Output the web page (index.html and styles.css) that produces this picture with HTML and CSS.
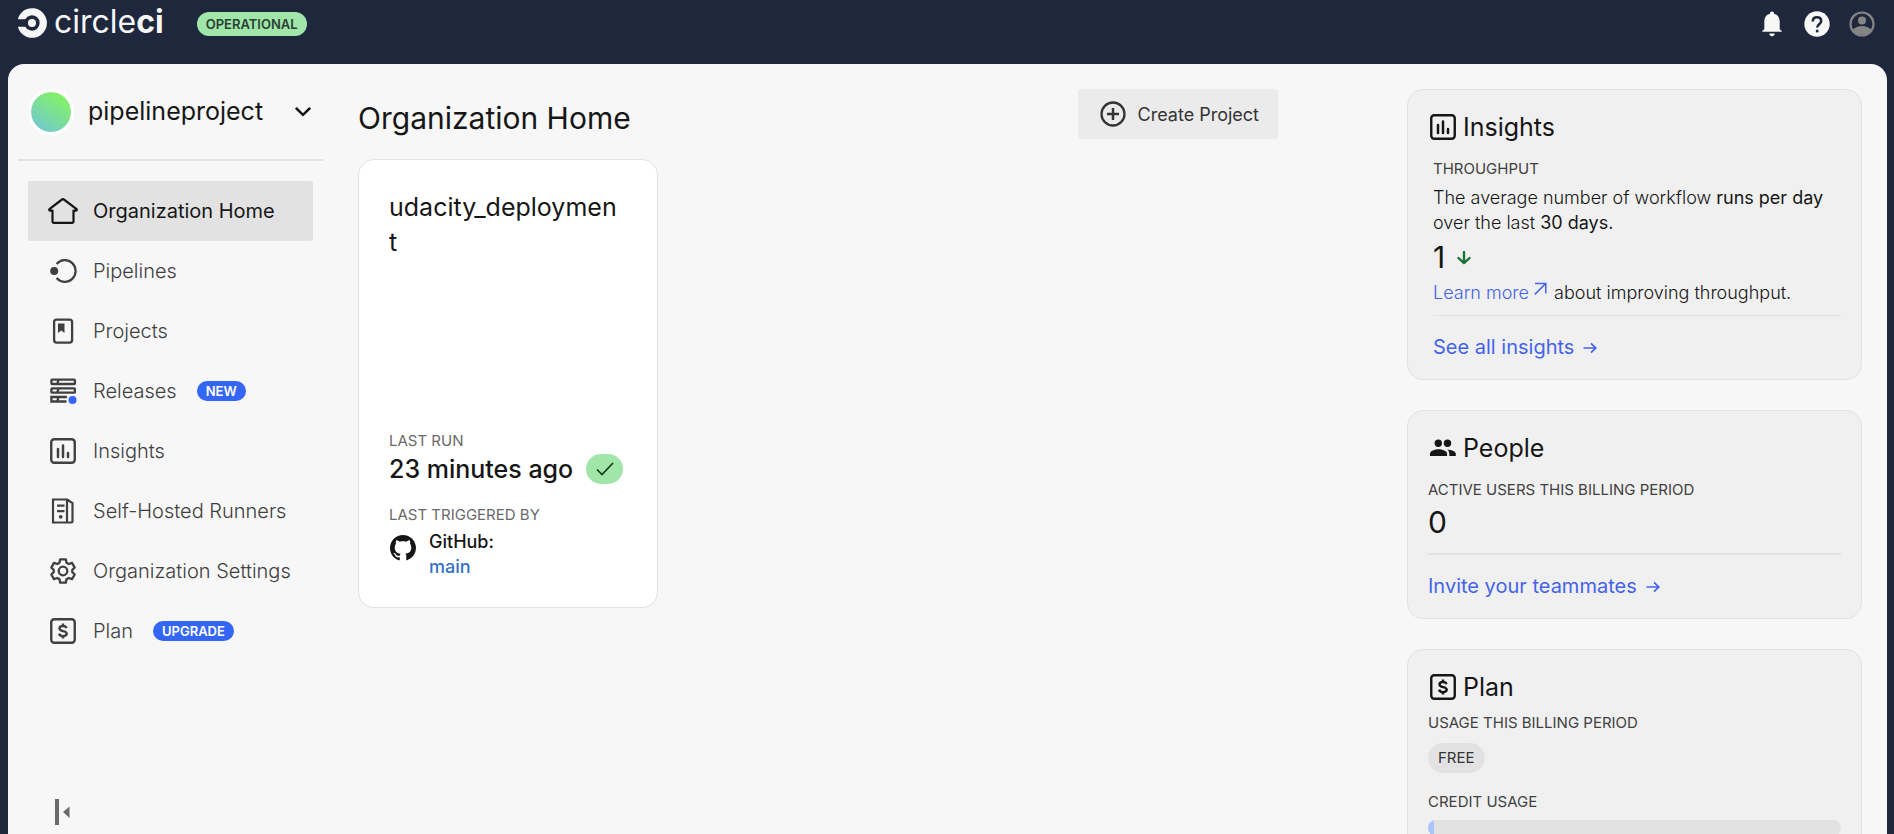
FILE: index.html
```html
<!DOCTYPE html>
<html lang="en">
<head>
<meta charset="utf-8">
<title>Organization Home - CircleCI</title>
<meta name="viewport" content="width=device-width, initial-scale=1">
<link rel="stylesheet" href="styles.css">
</head>
<body>
<svg class="defs" aria-hidden="true">
  <symbol id="i-chart" viewBox="0 0 26 26"><rect x="1.25" y="1.25" width="23.5" height="23.5" rx="3" fill="none" stroke="currentColor" stroke-width="2.4"/><path d="M8 11v8M13 7.500v11.500M18 15v4" fill="none" stroke="currentColor" stroke-width="2.500" stroke-linecap="round"/></symbol>
  <symbol id="i-dollar" viewBox="0 0 26 26"><rect x="1.25" y="1.25" width="23.500" height="23.500" rx="3" fill="none" stroke="currentColor" stroke-width="2.4"/><path d="M16.600 10.200C16 8.600 14.700 8 13 8c-2 0-3.500.9-3.500 2.500 0 3.700 7.200 1.500 7.200 5.100 0 1.700-1.600 2.600-3.700 2.600-1.900 0-3.400-.8-3.900-2.500M13 5.500V8M13 18v2.500" fill="none" stroke="currentColor" stroke-width="2.400"/></symbol>
  <symbol id="i-arrow" viewBox="0 0 14 12"><path d="M.5 6h12M8 1.300 12.800 6 8 10.700" fill="none" stroke="currentColor" stroke-width="1.700"/></symbol>
</svg>
<div class="app">
  <header class="topbar">
    <a class="logo" href="#" aria-label="CircleCI">
      <svg width="30" height="30" viewBox="0 0 30 30"><path d="M.8 11.300A14.800 14.800 0 1 1 .8 18.700H8.200A7.700 7.700 0 1 0 8.200 11.300Z" fill="currentColor"/><circle cx="15" cy="15" r="4" fill="currentColor"/></svg>
      <span class="logo-text">circle<b>ci</b></span>
    </a>
    <span class="status">OPERATIONAL</span>
    <div class="top-actions">
      <button type="button" aria-label="Notifications"><svg width="26" height="26" viewBox="0 0 26 26"><path d="M13 .5c1.300 0 2 .9 2 2.200 3.700.9 5.700 4 5.700 7.800v7.200c0 1.200 2.300 1.600 2.300 3.100H3c0-1.500 2.300-1.900 2.300-3.100v-7.200c0-3.800 2-6.900 5.700-7.800 0-1.300.7-2.200 2-2.200ZM10.200 22.500h5.600c-.2 1.800-1.300 2.800-2.800 2.800s-2.600-1-2.800-2.800Z" fill="currentColor"/></svg></button>
      <button type="button" aria-label="Help"><svg width="26" height="26" viewBox="0 0 26 26"><circle cx="13" cy="13" r="12.700" fill="currentColor"/><path d="M8.800 10.400c0-2.500 1.800-4.100 4.200-4.100s4.200 1.500 4.200 3.800c0 3-4 3.200-4 6.400" fill="none" stroke="#1f273d" stroke-width="2.500"/><circle cx="13.200" cy="20" r="1.500" fill="#1f273d"/></svg></button>
      <button type="button" class="account" aria-label="Account"><svg width="26" height="26" viewBox="0 0 26 26"><circle cx="13" cy="13" r="11.500" fill="none" stroke="currentColor" stroke-width="2.200"/><circle cx="13" cy="9.500" r="4" fill="currentColor"/><path d="M3.500 19c2.500-2.700 6-4 9.500-4s7 1.300 9.500 4a12 12 0 0 1-19 0Z" fill="currentColor"/></svg></button>
    </div>
  </header>
  <div class="panel">
    <div class="sidebar">
      <button type="button" class="org"><span class="avatar"></span><span class="org-name">pipelineproject</span>
        <svg width="16" height="10" viewBox="0 0 16 10"><path d="m1.500 1.500 6.500 6.300 6.500-6.300" fill="none" stroke="currentColor" stroke-width="2.500" stroke-linecap="round"/></svg>
      </button>
      <nav class="nav">
        <a class="active" href="#"><svg width="30" height="26" viewBox="0 0 30 26"><path d="M4.500 12.700H2.200c-1 0-1.300-1.200-.5-1.900L14 1.500c.6-.5 1.300-.5 1.900 0l12.400 9.300c.8.7.5 1.900-.5 1.900h-2.300v10.500c0 1-.6 1.600-1.600 1.600H6.100c-1 0-1.600-.6-1.600-1.600Z" fill="none" stroke="currentColor" stroke-width="2.200" stroke-linejoin="round"/></svg>Organization Home</a>
        <a href="#"><svg width="30" height="26" viewBox="0 0 30 26"><path d="M8.600 6A10.800 10.800 0 1 1 8.600 20" fill="none" stroke="currentColor" stroke-width="2.200"/><circle cx="6.200" cy="13" r="4" fill="currentColor"/></svg>Pipelines</a>
        <a href="#"><svg width="30" height="26" viewBox="0 0 30 26"><rect x="6.100" y="1.600" width="18" height="23" rx="2.500" fill="none" stroke="currentColor" stroke-width="2.300"/><path d="M10 5.500h6.500V15l-3.250-2.500L10 15Z" fill="currentColor"/></svg>Projects</a>
        <a href="#"><svg width="30" height="26" viewBox="0 0 30 26"><g fill="none" stroke="currentColor" stroke-width="2.300"><rect x="3.400" y="1.600" width="23.500" height="4.400" rx=".8"/><rect x="3.400" y="10.300" width="23.500" height="4.400" rx=".8"/><path d="M18.500 23.500H3.400v-4.500h15.500M10.500 1.500 9.300 6M10.500 10.200 9.300 14.800M10.500 18.900l-1.200 4.600"/></g><circle cx="24.500" cy="22" r="4" fill="#3366f5"/></svg>Releases<span class="tag">NEW</span></a>
        <a href="#"><span class="icon-slot"><svg width="26" height="26"><use href="#i-chart"/></svg></span>Insights</a>
        <a href="#"><svg width="30" height="26" viewBox="0 0 30 26"><path d="M5 1.500h14V24.500H5ZM19 1.500l5.500 3.600v18c0 .8-.6 1.400-1.400 1.400H19M9 7.700h7.500M9 13.200h7.500" fill="none" stroke="currentColor" stroke-width="2.200"/><circle cx="12.700" cy="18.800" r="1.900" fill="currentColor"/></svg>Self-Hosted Runners</a>
        <a href="#"><svg width="30" height="26" viewBox="-15 -13 30 26"><g fill="none" stroke="currentColor" stroke-width="2.300" stroke-linejoin="round"><path d="M-2.800-11.700H2.800L3.500-8.300 5.800-7 9-8.100 11.700-3.500 9.300-1.200V1.200L11.700 3.500 9 8.100 5.800 7 3.500 8.300 2.800 11.700H-2.800L-3.500 8.300-5.800 7-9 8.100-11.700 3.500-9.300 1.200V-1.200L-11.700-3.500-9-8.100-5.800-7-3.500-8.300Z"/><circle r="4.300"/></g></svg>Organization Settings</a>
        <a href="#"><span class="icon-slot"><svg width="26" height="26"><use href="#i-dollar"/></svg></span>Plan<span class="tag">UPGRADE</span></a>
      </nav>
      <button type="button" class="collapse" aria-label="Collapse sidebar"><svg width="16" height="26" viewBox="0 0 16 26"><path d="M0 0h4v26H0ZM14.500 7.500v11.500L8 13Z" fill="currentColor"/></svg></button>
    </div>
    <main class="main">
      <div class="main-head">
        <h1>Organization Home</h1>
        <button type="button" class="create"><svg width="26" height="26" viewBox="0 0 26 26"><circle cx="13" cy="13" r="11.500" fill="none" stroke="currentColor" stroke-width="2.300"/><path d="M13 7v12M7 13h12" stroke="currentColor" stroke-width="2.500"/></svg>Create Project</button>
      </div>
      <article class="project">
        <h2>udacity_deployment</h2>
        <div class="label muted">LAST RUN</div>
        <div class="run">23 minutes ago<span class="ok"><svg width="18" height="14" viewBox="0 0 18 14"><path d="m1 7.500 5 5L17 1" fill="none" stroke="currentColor" stroke-width="1.700"/></svg></span></div>
        <div class="label muted">LAST TRIGGERED BY</div>
        <div class="trigger">
          <svg width="26" height="26" viewBox="0 0 16 16"><path fill="currentColor" d="M8 0C3.580 0 0 3.580 0 8c0 3.540 2.290 6.530 5.470 7.590.4.070.55-.17.55-.38 0-.19-.01-.82-.01-1.490-2.010.37-2.530-.49-2.690-.94-.09-.23-.48-.94-.82-1.130-.28-.15-.68-.52-.01-.53.63-.01 1.080.58 1.230.82.72 1.210 1.870.87 2.330.66.070-.52.28-.87.51-1.070-1.780-.2-3.640-.89-3.640-3.950 0-.87.31-1.590.82-2.150-.08-.2-.36-1.020.08-2.120 0 0 .67-.21 2.200.82.64-.18 1.320-.27 2-.27s1.360.09 2 .27c1.530-1.040 2.200-.82 2.200-.82.44 1.100.16 1.920.08 2.120.51.560.82 1.270.82 2.150 0 3.070-1.870 3.750-3.650 3.950.29.25.54.73.54 1.480 0 1.070-.01 1.930-.01 2.200 0 .21.15.46.55.38A8.010 8.010 0 0 0 16 8c0-4.420-3.580-8-8-8Z"/></svg>
          <div>GitHub:<br><a href="#">main</a></div>
        </div>
      </article>
    </main>
    <aside class="aside">
      <section class="box">
        <h2><svg width="26" height="26"><use href="#i-chart"/></svg>Insights</h2>
        <div class="insights">
          <div class="label">THROUGHPUT</div>
          <p>The average number of workflow <b>runs per day</b> over the last <b>30 days.</b></p>
          <div class="number">1<svg width="14" height="14" viewBox="0 0 14 14"><path d="M7 1v11M1.500 7 7 12.200 12.500 7" fill="none" stroke="#1d7136" stroke-width="2.400" stroke-linecap="round" stroke-linejoin="round"/></svg></div>
          <p><a href="#">Learn more <svg class="ext" width="13" height="13" viewBox="0 0 13 13"><path d="M1 1.500h10.800v10M11.500 1.700.8 12.400" fill="none" stroke="currentColor" stroke-width="1.500"/></svg></a> about improving throughput.</p>
          <hr class="thin">
          <a class="more" href="#">See all insights<svg width="14" height="12"><use href="#i-arrow"/></svg></a>
        </div>
      </section>
      <section class="box">
        <h2><svg width="26" height="18" viewBox="0 0 26 18"><g fill="currentColor"><circle cx="8.300" cy="4.300" r="3.700"/><circle cx="17.500" cy="4.300" r="3.700"/><path d="M0 17v-2.200c0-2.900 5-4.500 8.500-4.500s8.600 1.600 8.600 4.500V17ZM17.300 10.400c3.500.2 8.500 1.700 8.500 4.400V17h-6.500v-2.400c0-1.800-.8-3.200-2-4.200Z"/></g></svg>People</h2>
        <div class="label">ACTIVE USERS THIS BILLING PERIOD</div>
        <div class="number">0</div>
        <hr>
        <a class="more" href="#">Invite your teammates<svg width="14" height="12"><use href="#i-arrow"/></svg></a>
      </section>
      <section class="box plan">
        <h2><svg width="26" height="26"><use href="#i-dollar"/></svg>Plan</h2>
        <div class="label">USAGE THIS BILLING PERIOD</div>
        <span class="free">FREE</span>
        <div class="label">CREDIT USAGE</div>
        <div class="bar"><div class="fill"></div></div>
      </section>
    </aside>
  </div>
</div>
</body>
</html>
```
FILE: styles.css
```css
* { box-sizing: border-box; }
body {
  margin: 0;
  background: #1f273d;
  color: #161616;
  font: 400 18px/25px Inter, "Liberation Sans", sans-serif;
}
h1, h2, p { margin: 0; font-weight: 400; }
a { color: #4463ea; text-decoration: none; }
button { font: inherit; color: inherit; background: none; border: 0; padding: 0; cursor: pointer; }
svg { flex: none; }
.defs { position: absolute; width: 0; height: 0; }

.app { display: flex; flex-direction: column; height: 100vh; }

.topbar {
  display: flex;
  align-items: flex-start;
  flex: none;
  height: 64px;
  padding: 8px 19px 8px 17px;
  color: #f7f7f7;
}
.logo { display: flex; align-items: center; gap: 7px; height: 30px; color: #f7f7f7; }
.logo-text { font-size: 32px; line-height: 26px; padding-bottom: 2px; }
.logo-text b { font-weight: 700; }
.status {
  margin: 4px 0 0 33px;
  padding: 0 9px;
  border-radius: 12px;
  background: #9fe6a8;
  color: #2a4034;
  font-size: 13px;
  font-weight: 600;
  line-height: 24px;
}
.top-actions { display: flex; gap: 19px; margin: 3px 0 0 auto; }
.top-actions button { height: 26px; }
.account { color: #858585; }

.panel {
  display: flex;
  flex: 1;
  min-height: 0;
  margin: 0 7px 0 8px;
  padding-right: 25px;
  border-radius: 16px 16px 0 0;
  background: #f7f7f7;
  overflow: hidden;
}

.sidebar { display: flex; flex-direction: column; flex: none; width: 315px; padding: 0 0 9px 10px; }
.org {
  display: flex;
  align-items: center;
  flex: none;
  height: 97px;
  padding: 0 12px 0 10px;
  border-bottom: 2px solid #e2e2e2;
  text-align: left;
}
.avatar {
  width: 46px;
  height: 46px;
  border: 3px solid #fff;
  border-radius: 50%;
  background: linear-gradient(215deg, #84f55f 15%, #6fc3e0 95%) border-box;
  background-clip: padding-box;
}
.org-name { flex: 1; margin-left: 14px; font-size: 25px; }
.nav { display: flex; flex-direction: column; padding: 20px 10px 0; }
.nav a {
  display: flex;
  align-items: center;
  height: 60px;
  padding-left: 20px;
  border-radius: 2px;
  color: #404040;
  font-size: 20px;
  font-weight: 300;
  white-space: nowrap;
}
.nav a > svg, .icon-slot { width: 30px; margin-right: 15px; }
.icon-slot { display: flex; justify-content: center; flex: none; }
.nav .active { background: #e2e2e2; color: #161616; font-weight: 400; }
.tag {
  margin-left: 20px;
  padding: 0 9px;
  border-radius: 10px;
  background: #3366f5;
  color: #fff;
  font-size: 13px;
  font-weight: 600;
  line-height: 20px;
}
.collapse { align-self: flex-start; height: 26px; margin: auto 0 0 37px; color: #6a6a6a; }

.main { flex: 1; min-width: 0; padding: 25px 129px 0 35px; }
.main-head { display: flex; align-items: flex-start; justify-content: space-between; height: 70px; }
h1 { padding-top: 10px; font-size: 30px; line-height: 38px; }
.create {
  display: flex;
  align-items: center;
  gap: 12px;
  height: 50px;
  padding: 0 19px 0 22px;
  border-radius: 3px;
  background: #ebebeb;
  color: #343434;
}
.project {
  display: flex;
  flex-direction: column;
  width: 300px;
  height: 449px;
  padding: 30px 30px 28px;
  border: 1px solid #e2e2e2;
  border-radius: 16px;
  background: #fff;
}
.project h2 { flex: 1; padding-right: 8px; font-size: 25px; line-height: 35px; overflow-wrap: anywhere; }
.label { color: #404040; font-size: 15px; line-height: 20px; }
.muted { color: #6a6a6a; }
.run { display: flex; align-items: center; gap: 13px; height: 30px; margin: 3px 0 21px; font-size: 25px; font-weight: 500; white-space: nowrap; }
.ok { display: flex; align-items: center; justify-content: center; width: 37px; height: 30px; border-radius: 15px; background: #9fe6a8; color: #123a1c; }
.trigger { display: flex; gap: 13px; margin-top: 4px; padding-left: 1px; font-weight: 500; }
.trigger svg { margin-top: 6px; }
.trigger a { color: #3272c4; }

.aside { flex: none; width: 455px; padding-top: 25px; overflow-y: auto; scrollbar-width: none; }
.box { margin-bottom: 30px; padding: 21px 20px 19px; border: 1px solid #e2e2e2; border-radius: 16px; background: #f0f0f0; }
.box h2 { display: flex; align-items: center; gap: 7px; margin-bottom: 16px; padding-left: 2px; font-size: 25px; line-height: 32px; }
.box p { font-weight: 300; }
.box p b { font-weight: 400; }
.insights { padding-left: 5px; }
.insights .label { margin-bottom: 6px; }
.number { display: flex; align-items: center; gap: 12px; font-size: 30px; line-height: 45px; }
.ext { margin: 0 2px 4px 0; }
hr { height: 2px; margin: 8px 0 19px; border: 0; background: #e2e2e2; }
.thin { height: 1px; margin-top: 10px; }
.more { display: flex; align-items: center; gap: 9px; font-size: 20px; line-height: 25px; }
.plan h2 { margin-bottom: 10px; }
.free {
  display: inline-block;
  margin: 10px 0 19px;
  padding: 0 10px;
  border-radius: 15px;
  background: #e2e2e2;
  color: #343434;
  font-size: 15px;
  line-height: 30px;
}
.bar { height: 16px; margin: 8px 0 20px; border-radius: 8px; background: #e2e2e2; overflow: hidden; }
.fill { width: 6px; height: 100%; background: #a9c5ff; }
```
